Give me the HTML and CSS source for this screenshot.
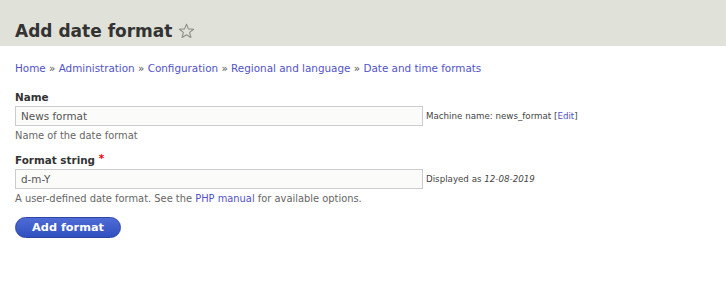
FILE: index.html
```html
<!DOCTYPE html>
<html>
<head>
<meta charset="utf-8">
<link rel="stylesheet" href="styles.css">
</head>
<body>
<header class="page-header">
  <h1 class="title">Add date format <span class="star">
    <svg width="17" height="16" viewBox="0 0 17 16"><path d="M8.5 1.2 L10.4 5.9 L15.6 6.2 L11.6 9.4 L12.9 14.5 L8.5 11.7 L4.1 14.5 L5.4 9.4 L1.4 6.2 L6.6 5.9 Z" fill="none" stroke="#8f8f86" stroke-width="1.1" stroke-linejoin="round"/></svg>
  </span></h1>
</header>
<main class="content">
  <nav class="breadcrumb">
    <a href="#">Home</a> » <a href="#">Administration</a> » <a href="#">Configuration</a> » <a href="#">Regional and language</a> » <a href="#">Date and time formats</a>
  </nav>
  <form class="form">
    <div class="item">
      <label class="label">Name</label>
      <div class="row">
        <input class="text" type="text" value="News format">
        <span class="suffix">Machine name: news_format [<a href="#">Edit</a>]</span>
      </div>
      <div class="desc">Name of the date format</div>
    </div>
    <div class="item">
      <label class="label">Format string <span class="req">*</span></label>
      <div class="row">
        <input class="text" type="text" value="d-m-Y">
        <span class="suffix">Displayed as <em>12-08-2019</em></span>
      </div>
      <div class="desc">A user-defined date format. See the <a href="#">PHP manual</a> for available options.</div>
    </div>
    <div class="actions">
      <button class="button" type="button">Add format</button>
    </div>
  </form>
</main>
</body>
</html>
```
FILE: styles.css
```css
* { box-sizing: border-box; }
html, body { margin: 0; padding: 0; background: #fff; }
body { font-family: "DejaVu Sans", "Liberation Sans", sans-serif; color: #333; }
a { color: #5252c8; text-decoration: none; }
.page-header { background: #e0e1d8; height: 46px; padding: 0 15px; display: flex; align-items: flex-end; }
.title { margin: 0 0 3px; font-size: 17px; font-weight: bold; color: #333; display: flex; align-items: center; gap: 6px; line-height: 24px; }
.star { display: inline-flex; }
.content { padding: 14px 15px 0; }
.breadcrumb { font-size: 10.4px; color: #555; line-height: 16px; }
.form { margin-top: 13px; }
.item { margin-bottom: 9px; }
.label { display: block; font-weight: bold; font-size: 10.4px; height: 15px; line-height: 14px; padding-top: 1px; margin-bottom: 2px; color: #333; }
.req { color: #e00; vertical-align: 2px; line-height: 0; }
.row { display: flex; align-items: center; gap: 3px; }
.text { width: 408px; height: 20px; border: 1px solid #ccc; background: #fbfbfa; font-family: inherit; font-size: 10.4px; color: #555; padding: 0 5px; margin: 0; }
.suffix { font-size: 8.7px; color: #444; }
.desc { font-size: 9.9px; color: #666; margin-top: 3px; line-height: 14px; }
.actions { margin-top: 10px; }
.button { width: 106px; height: 21px; border-radius: 12px; border: 1px solid #2d43a6; background: linear-gradient(#4e6bd6, #3150c0); color: #fff; font-family: inherit; font-weight: bold; font-size: 11.3px; padding: 0; }
```
